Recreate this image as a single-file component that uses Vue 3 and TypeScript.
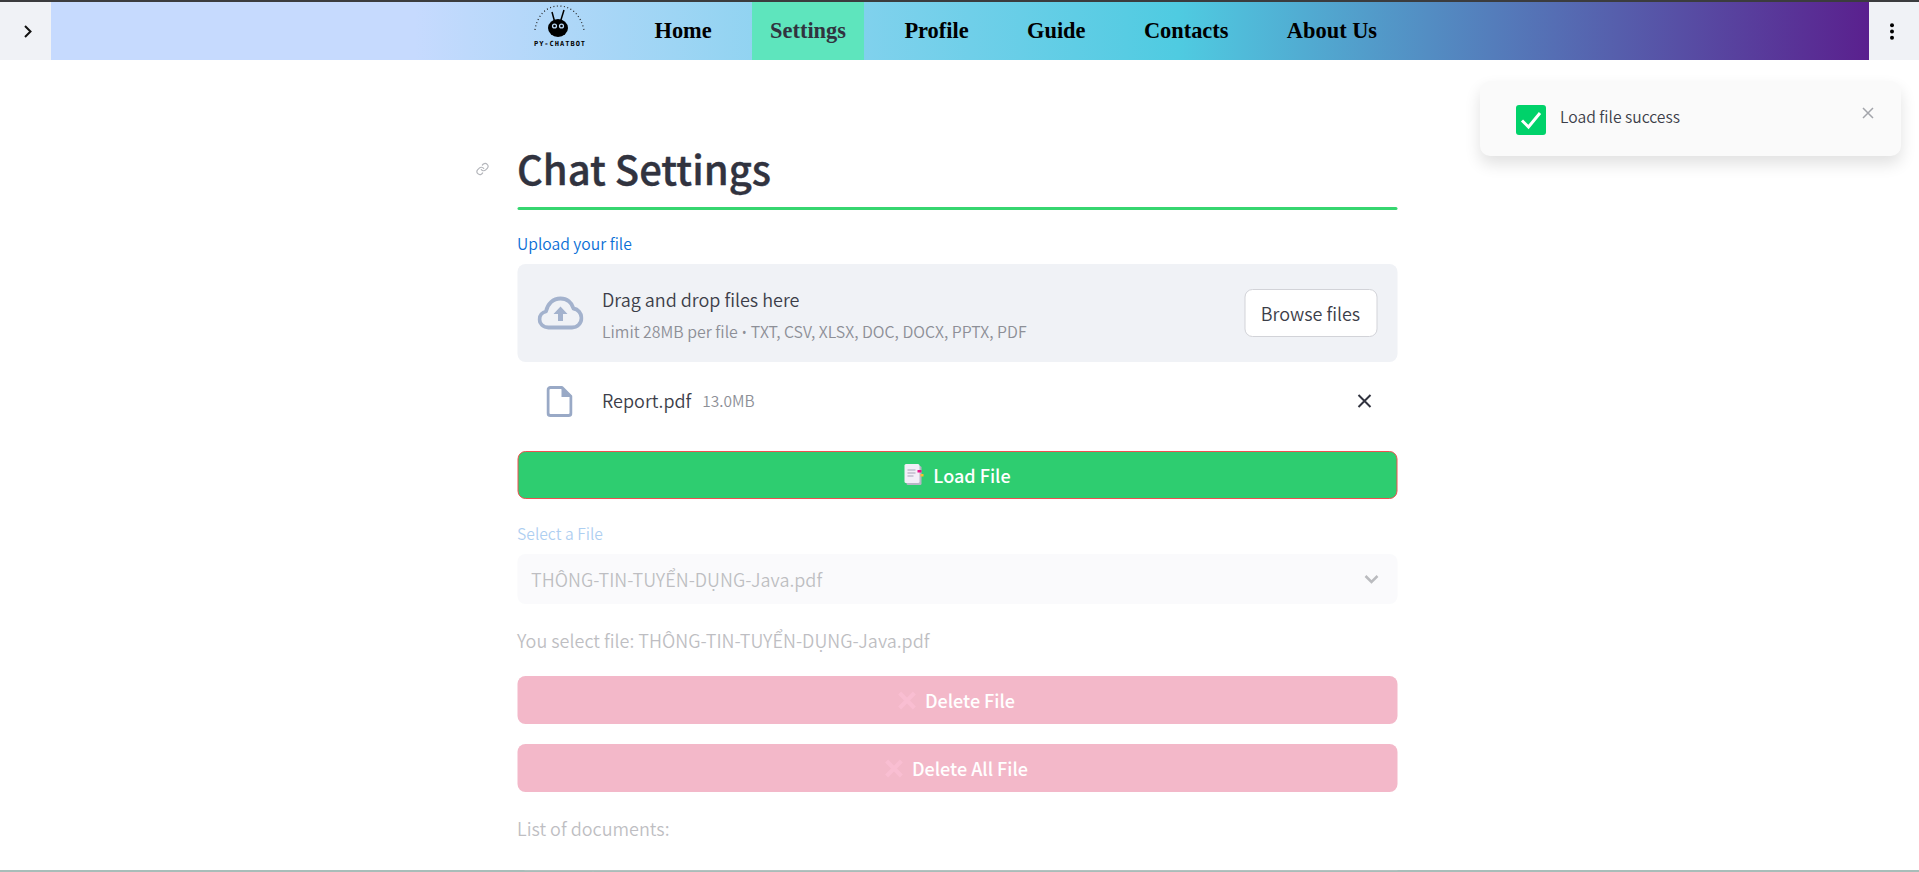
<script setup lang="ts">
const navItems = ['Home', 'Settings', 'Profile', 'Guide', 'Contacts', 'About Us']
const activeItem = 'Settings'
const selectedFile = 'THÔNG-TIN-TUYỂN-DỤNG-Java.pdf'
</script>

<template>
  <div class="page">
    <header class="topbar">
      <button class="side-btn left">
        <svg width="10" height="13" viewBox="0 0 10 13"><path d="M2 1l5.500 5.500L2 12" fill="none" stroke="#111" stroke-width="2" /></svg>
      </button>
      <nav class="nav">
        <div class="logo">
          <svg width="54" height="36" viewBox="0 0 54 36">
            <path d="M2 27C4 13 13 3 26 3s22 10 25 24" fill="none" stroke="#222" stroke-width="1.200" stroke-dasharray="1 2.500" />
            <path d="M22 20 19 9M27 20l4-13" fill="none" stroke="#000" stroke-width="1.500" />
            <ellipse cx="25" cy="25" rx="10" ry="9" />
            <circle cx="21.500" cy="23" r="2.600" fill="#bcd9f5" />
            <circle cx="28.500" cy="23" r="2.600" fill="#bcd9f5" />
            <circle cx="21.500" cy="23" r="1.300" />
            <circle cx="28.500" cy="23" r="1.300" />
          </svg>
          <span class="logo-text">PY-CHATBOT</span>
        </div>
        <a v-for="item in navItems" :key="item" :class="['nav-item', { active: item === activeItem }]">{{ item }}</a>
      </nav>
      <button class="side-btn right">
        <svg width="6" height="17" viewBox="0 0 6 17"><circle cx="3" cy="2.200" r="2" /><circle cx="3" cy="8.500" r="2" /><circle cx="3" cy="14.800" r="2" /></svg>
      </button>
    </header>

    <main class="main">
      <div class="content">
        <div class="title-row">
          <svg class="anchor" width="14" height="14" viewBox="0 0 24 24" fill="none" stroke="#b4b6bb" stroke-width="2" stroke-linecap="round">
            <path d="M10 13a5 5 0 0 0 7.500.5l3-3a5 5 0 0 0-7-7l-1.700 1.700" />
            <path d="M14 11a5 5 0 0 0-7.500-.5l-3 3a5 5 0 0 0 7 7l1.700-1.700" />
          </svg>
          <h1>Chat Settings</h1>
        </div>
        <div class="rule"></div>

        <label class="label">Upload your file</label>
        <section class="dropzone">
          <svg class="cloud" width="46" height="34" viewBox="0 0 46 34">
            <path d="M11 31.500C5.500 31.500 2 27.500 2 23.500c0-4 2.800-7.300 6.500-8C10 8 15.500 2.500 23 2.500c6.500 0 11.500 4.300 13 10 4.500.7 8 4.700 8 9.500 0 5.300-4.200 9.500-9.500 9.500z" fill="none" stroke="#a3b2cd" stroke-width="3.800" stroke-linejoin="round" />
            <path d="M23 10.500 30 18h-4.500v7h-5v-7H16z" fill="#a3b2cd" />
          </svg>
          <div class="drop-text">
            <div class="drop-title">Drag and drop files here</div>
            <div class="drop-hint">Limit 28MB per file <span class="bullet">•</span> TXT, CSV, XLSX, DOC, DOCX, PPTX, PDF</div>
          </div>
          <button class="browse">Browse files</button>
        </section>

        <div class="file-row">
          <svg class="file-icon" width="26" height="31" viewBox="0 0 26 31">
            <path d="M4 1.500h11.500L24.500 10.500V27a2.500 2.500 0 0 1-2.500 2.500H4A2.500 2.500 0 0 1 1.500 27V4A2.500 2.500 0 0 1 4 1.500z" fill="none" stroke="#99a9c6" stroke-width="3" stroke-linejoin="round" />
            <path d="M15 1.500 24.500 11H15z" fill="#99a9c6" />
          </svg>
          <span class="file-name">Report.pdf</span>
          <span class="file-size">13.0MB</span>
          <svg class="file-close" width="16" height="16" viewBox="0 0 16 16"><path d="M2 2l12 12M14 2 2 14" stroke="#31333f" stroke-width="2" /></svg>
        </div>

        <button class="btn load">
          <svg width="22" height="24" viewBox="0 0 22 24">
            <rect x="3" y="3" width="15" height="19" rx="1.500" fill="#b9b5c6" />
            <rect x="1" y="1" width="15" height="19" rx="1.500" fill="#f3eef8" />
            <path d="M4 7h8M4 10h8M4 13h6" stroke="#a8a4b8" stroke-width="1.200" />
            <rect x="14" y="7" width="4" height="2.500" fill="#e6178a" />
            <rect x="17" y="11" width="3" height="2.500" fill="#f7c02f" />
          </svg>
          <span>Load File</span>
        </button>

        <div class="faded">
          <label class="label select-label">Select a File</label>
          <div class="select">
            <span>{{ selectedFile }}</span>
            <svg width="20" height="20" viewBox="0 0 20 20"><path d="M4 7l6 6 6-6" fill="none" stroke="#31333f" stroke-width="2.500" /></svg>
          </div>
          <p class="selected-text">You select file: {{ selectedFile }}</p>
          <button class="btn danger">
            <svg width="19" height="19" viewBox="0 0 18 18"><path d="M2 2l14 14M16 2 2 16" stroke="#ee3d78" stroke-width="4" /></svg>
            <span>Delete File</span>
          </button>
          <button class="btn danger second">
            <svg width="19" height="19" viewBox="0 0 18 18"><path d="M2 2l14 14M16 2 2 16" stroke="#ee3d78" stroke-width="4" /></svg>
            <span>Delete All File</span>
          </button>
          <p class="list-title">List of documents:</p>
          <div class="table-stub"><div class="table-cell"></div></div>
        </div>
      </div>

      <aside class="toast">
        <svg class="toast-icon" width="30" height="30" viewBox="0 0 30 30">
          <rect width="30" height="30" rx="3" fill="#00d26a" />
          <path d="M6 15.500 12.500 22 24 8" fill="none" stroke="#fff" stroke-width="3" />
        </svg>
        <span class="toast-text">Load file success</span>
        <svg class="toast-close" width="12" height="12" viewBox="0 0 12 12"><path d="M1 1l10 10M11 1 1 11" stroke="#a3a5ab" stroke-width="1.500" /></svg>
      </aside>
    </main>
    <div class="edge"></div>
  </div>
</template>

<style>
html,
body {
  margin: 0;
  background: #fff;
  overflow: hidden;
}
</style>

<style scoped>
.page {
  width: 1919px;
  height: 872px;
  display: flex;
  flex-direction: column;
  overflow: hidden;
  background: #fff;
  color: #3c3e49;
  font-family: "Noto Sans CJK SC", "Noto Sans", sans-serif;
  font-weight: 350;
}
.topbar {
  height: 58px;
  flex: none;
  display: flex;
  border-top: 2px solid #3b3c3e;
}
.side-btn {
  flex: none;
  border: 0;
  padding: 0;
  background: #f0f2f6;
  display: flex;
  align-items: center;
  justify-content: center;
}
.side-btn.left {
  width: 51px;
  padding-left: 5px;
}
.side-btn.right {
  width: 50px;
  padding-right: 5px;
}
.nav {
  flex: 1;
  display: flex;
  align-items: stretch;
  padding-left: 482px;
  background: linear-gradient(to right, #c6dafe 20%, #4fcbe1 62%, #5a208e 100%);
  font-family: "Liberation Serif", serif;
  font-weight: 700;
  font-size: 22.400px;
  color: #000;
}
.logo {
  width: 54px;
  margin-right: 49.500px;
  display: flex;
  flex-direction: column;
  align-items: center;
  padding-top: 1px;
  box-sizing: border-box;
}
.logo svg {
  display: block;
  flex: none;
}
.logo-text {
  font-family: "DejaVu Sans Mono", monospace;
  font-weight: 700;
  font-size: 7px;
  line-height: 8px;
  letter-spacing: 1px;
  margin-top: 1px;
  white-space: nowrap;
}
.nav-item {
  display: flex;
  align-items: center;
  padding: 0 18px;
  margin-right: 22.400px;
}
.nav-item.active {
  background: #5ee5bd;
  color: #31333f;
}
.main {
  flex: 1;
  min-height: 0;
  position: relative;
}
.content {
  width: 880px;
  margin: 0 auto;
  transform: translateX(-2.500px);
}
.title-row {
  position: relative;
  padding-top: 80px;
  height: 67px;
}
.anchor {
  position: absolute;
  left: -42px;
  top: 102px;
}
h1 {
  margin: 0;
  font-size: 40px;
  line-height: 56px;
  font-weight: 500;
  -webkit-text-stroke: 0.4px #31333f;
  color: #31333f;
}
.rule {
  height: 3px;
  background: #36d670;
  border-radius: 2px;
  margin-bottom: 24px;
}
.label {
  display: block;
  font-size: 15.700px;
  line-height: 20px;
  color: #0b6fd6;
}
.dropzone {
  margin-top: 10px;
  height: 98px;
  background: #f0f2f6;
  border-radius: 8px;
  display: flex;
  align-items: center;
  padding: 0 20px;
}
.cloud {
  margin-right: 19px;
}
.drop-text {
  flex: 1;
  padding-top: 3px;
}
.drop-title {
  font-size: 18px;
  line-height: 24px;
}
.drop-hint {
  margin-top: 11px;
  font-size: 15.900px;
  line-height: 20px;
  color: #8d8f97;
}
.bullet {
  font-family: "Noto Sans", sans-serif;
}
.browse {
  width: 133px;
  height: 48px;
  border: 1px solid #d2d3d8;
  border-radius: 8px;
  background: #fff;
  color: inherit;
  font: inherit;
  font-size: 18px;
}
.file-row {
  height: 78px;
  margin-bottom: 11px;
  display: flex;
  align-items: center;
  padding-left: 29px;
  padding-right: 25px;
}
.file-name {
  margin-left: 30px;
  margin-bottom: 2px;
  font-size: 18px;
}
.file-size {
  margin-left: 11px;
  margin-bottom: 2px;
  font-size: 15.500px;
  color: #8d8f97;
}
.file-close {
  margin-left: auto;
}
.btn {
  width: 100%;
  height: 48px;
  display: flex;
  align-items: center;
  justify-content: center;
  gap: 8px;
  border-radius: 8px;
  box-sizing: border-box;
  font: inherit;
  font-size: 18px;
  font-weight: 500;
  color: #fff;
}
.load {
  background: #2ecd70;
  border: 1.500px solid #f04f50;
}
.faded {
  opacity: 0.33;
  padding-top: 25px;
}
.select {
  margin-top: 10px;
  height: 50px;
  padding: 0 16px 0 14px;
  background: #f0f2f6;
  border-radius: 8px;
  display: flex;
  align-items: center;
  justify-content: space-between;
  font-size: 18px;
}
.selected-text {
  margin: 23px 0 23px;
  font-size: 18px;
  line-height: 26px;
}
.danger {
  background: #db2b5e;
  border: 0;
  padding-left: 5px;
}
.second {
  margin-top: 20px;
}
.list-title {
  margin: 24px 0 30px;
  font-size: 18px;
  line-height: 24px;
}
.table-stub {
  height: 10px;
  margin-left: 7px;
  border-top: 1px solid #ccc;
}
.table-cell {
  width: 68px;
  height: 100%;
  border-right: 1px solid #ccc;
}
.toast {
  position: absolute;
  left: 1480px;
  top: 21px;
  width: 421px;
  height: 75px;
  box-sizing: border-box;
  padding: 0 36px;
  display: flex;
  align-items: center;
  gap: 14px;
  background: #fafafa;
  border-radius: 10px;
  box-shadow: 0 8px 16px rgba(0, 0, 0, 0.12);
}
.toast-icon {
  margin-top: 2px;
}
.toast-text {
  font-size: 15.700px;
  line-height: 24px;
  margin-bottom: 3px;
}
.toast-close {
  position: absolute;
  right: 27px;
  top: 26px;
}
.edge {
  height: 2px;
  flex: none;
  background: #a8bdb9;
}
</style>
